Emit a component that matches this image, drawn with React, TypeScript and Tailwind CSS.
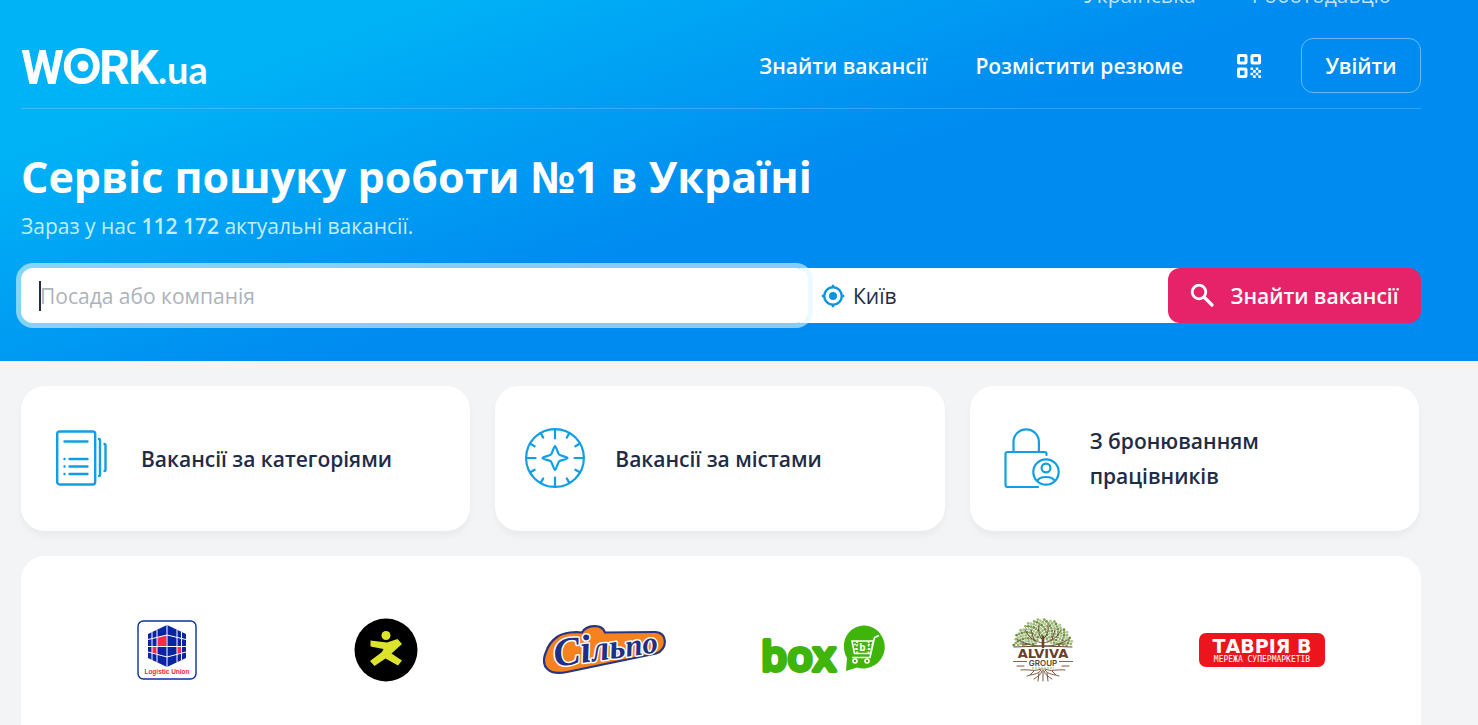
import type { ReactNode } from "react";

const container = "pl-[21px] pr-[57px]";

function WorkLogo() {
  return (
    <svg width="190" height="50" viewBox="0 -4 190 50" fill="#fff" fontWeight="700" role="img" aria-label="WORK.ua">
      <g fontFamily="Roboto, sans-serif" fontSize="49">
        <text x="0" y="38">W</text>
        <text x="41" y="38" fontFamily="Lato, sans-serif">O</text>
        <text x="78" y="38" fontSize="48">R</text>
        <text x="107" y="38" fontSize="48">K</text>
      </g>
      <text x="137" y="38" fontFamily="Lato, sans-serif" fontSize="38">.ua</text>
      <circle cx="62" cy="20" r="5.5" />
    </svg>
  );
}

function QrIcon() {
  return (
    <svg width="24" height="24" viewBox="0 0 24 24" fill="none" stroke="#fff" strokeWidth="3">
      <rect x="1.5" y="1.5" width="7.5" height="7.5" rx="0.5" />
      <rect x="15" y="1.5" width="7.5" height="7.5" rx="0.5" />
      <rect x="1.5" y="15" width="7.5" height="7.5" rx="0.5" />
      <path
        fill="#fff"
        stroke="none"
        d="M13.5 13.5h2.6v2.6h-2.6zM18.7 13.5h2.6v2.6h-2.6zM16.1 16.1h2.6v2.6h-2.6zM21.3 16.1h2.6v2.6h-2.6zM13.5 18.7h2.6v2.6h-2.6zM18.7 18.7h2.6v2.6h-2.6zM16.1 21.3h2.6v2.6h-2.6zM21.3 21.3h2.6v2.6h-2.6z"
      />
    </svg>
  );
}

function TargetIcon() {
  return (
    <svg width="24" height="24" viewBox="0 0 24 24" fill="none" stroke="#0f93dc">
      <circle cx="12" cy="12" r="8.8" strokeWidth="2.4" />
      <circle cx="12" cy="12" r="4" fill="#0f93dc" stroke="none" />
      <path strokeWidth="2.4" d="M12 .8V4M12 20v3.200M.8 12H4M20 12h3.200" />
    </svg>
  );
}

function SearchIcon() {
  return (
    <svg width="24" height="24" viewBox="0 0 24 24" fill="none" stroke="#fff">
      <circle cx="9" cy="8" r="6.8" strokeWidth="2.8" />
      <path strokeWidth="3.2" strokeLinecap="round" d="M14.500 13.500 22 21" />
    </svg>
  );
}

function CategoriesIcon() {
  return (
    <svg width="60" height="60" viewBox="-4 -1 60 60" fill="none" stroke="#109fe4" strokeWidth="2.4" strokeLinecap="round">
      <rect x="2.200" y="2.500" width="38" height="53" rx="2.500" />
      <path d="M9.500 12.500h23M14.500 30h18M14.500 37.500h18M14.500 45h18M9.500 30h.1M9.500 37.500h.1M9.500 45h.1" />
      <path d="M44 10q1 0 1 1.500v34q0 1.500-1 1.500M49.500 15q1 0 1 1.500v24q0 1.500-1 1.500" />
    </svg>
  );
}

function CompassIcon() {
  const ticks = Array.from({ length: 12 }, (_, i) => i);
  return (
    <svg width="60" height="60" viewBox="0 0 60 60" fill="none" stroke="#109fe4" strokeWidth="2.2" strokeLinecap="round" strokeLinejoin="round">
      <circle cx="30" cy="30" r="28.900" />
      {ticks.map((i) => (
        <path key={i} d={i % 3 === 0 ? "M30 1v9.500" : "M30 1v5.500"} transform={`rotate(${i * 30} 30 30)`} />
      ))}
      <path d="M30 18c1 0 3 7.500 4 8.500s8.500 2.500 8.500 3.500-7.500 2.500-8.500 3.500-3 8.500-4 8.500-3-7.500-4-8.500-8.500-2.500-8.500-3.500 7.500-2.500 8.500-3.500 3-8.500 4-8.500z" />
    </svg>
  );
}

function ReservedIcon() {
  return (
    <svg width="60" height="60" viewBox="-4 0 60 60" fill="none" stroke="#109fe4" strokeWidth="2.2" strokeLinecap="round">
      <path d="M9.500 24V14a12.700 12.700 0 0 1 25.400 0v10" />
      <path d="M42.500 27v-1.500q0-1.500-2-1.500H3.500q-2 0-2 2v31q0 2 2 2H34" />
      <circle cx="42" cy="44" r="12.700" />
      <circle cx="42" cy="40" r="4.400" />
      <path d="M33.500 52.500q2-3.500 8.500-3.500t8.500 3.500" />
    </svg>
  );
}

function LogisticUnion() {
  return (
    <svg width="60" height="60" viewBox="0 0 60 60">
      <rect x="1" y="1" width="58" height="58" rx="5.500" fill="#fff" stroke="#0b2f9e" strokeWidth="1.400" />
      <path d="M30 5 49 14v24L30 47 11 38V14z" fill="#0a23a0" />
      <path d="M20 17.500 29.500 15v11H20zM15 27h5v6.500l-5-1zM40 27h4.500v5.500l-4.500 1z" fill="#ff2b43" />
      <path
        d="M30 5v42M20 9.500v33M15 12v28M40 9.500v33M44.500 12v28M11 19.500 30 15l19 4.500M11 26.500h38M11 32l19 5 19-5"
        fill="none"
        stroke="#fff"
        strokeWidth="1"
      />
      <text x="30" y="54" textAnchor="middle" fontFamily="Liberation Sans, sans-serif" fontWeight="700" fontSize="6.500" fill="#f5233b">
        Logistic Union
      </text>
    </svg>
  );
}

function RunningMan() {
  return (
    <svg width="64" height="64" viewBox="0 0 64 64">
      <circle cx="32" cy="32" r="31.500" fill="#000" />
      <g fill="#dbe32b">
        <circle cx="32" cy="17.500" r="4.500" />
        <path d="M16.500 22.500 33 24.500 43.500 21 48 26 37.500 35.500 48 42.500 44 47.500 31.500 40.500 20.500 48 16 43 28 34 29.500 31 16.500 28.500z" />
      </g>
    </svg>
  );
}

function Silpo() {
  return (
    <svg width="124" height="52" viewBox="0 0 124 52">
      <path
        d="M14 13C21 8 33 7.500 39 8.500 43 1 59-1 62 8.500L112 8C125 8 125 26 113 29.500L24 48C5 52-3 42 3 28 5 22 9 16.500 14 13z"
        fill="#f5821f"
        stroke="#27357f"
        strokeWidth="2.200"
      />
      {/* white halo sits behind the letters */}
      <g
        transform="rotate(-8 60 30)"
        fontFamily="Liberation Serif, serif"
        fontWeight="700"
        fontStyle="italic"
        stroke="#fff"
        strokeWidth="3"
        paintOrder="stroke"
        strokeLinejoin="round"
        fill="#1f2f86"
      >
        <text x="11" y="36">
          <tspan fontSize="40">Сі</tspan>
          <tspan fontSize="35">ль</tspan>
          <tspan fontSize="31">по</tspan>
        </text>
      </g>
    </svg>
  );
}

function BoxMarket() {
  return (
    <svg width="126" height="52" viewBox="0 0 126 52">
      <text
        x="0"
        y="47"
        fontFamily="Open Sans, sans-serif"
        fontWeight="600"
        fontSize="42"
        fill="#3fb50b"
        stroke="#3fb50b"
        strokeWidth="4"
        strokeLinejoin="round"
      >
        box
      </text>
      <path d="M86 34C78 20 86 1.500 104 1.500a21.500 21.500 0 1 1-8 42L85 47z" fill="#3fb50b" />
      <g fill="none" stroke="#fff" strokeWidth="1.600">
        <path d="M118 11.500l-4.500 2L109 33.500H91M91 17h21.500l-3 12.500H93.500z" />
        <path strokeDasharray="2 1.500" d="M93 20.500h18M93.500 25h16M96 17v12M107.500 17v12" />
        <circle cx="94" cy="37" r="2" />
        <circle cx="106" cy="37" r="2" />
      </g>
      <circle cx="101.500" cy="23" r="5" fill="#3fb50b" />
      <text x="101.500" y="26.500" textAnchor="middle" fontFamily="Open Sans, sans-serif" fontWeight="700" fontSize="10" fill="#fff">
        b
      </text>
    </svg>
  );
}

// The crown is a half-disc of leaves laid out on a sunflower spiral.
const leaves = Array.from({ length: 340 }, (_, i) => {
  const r = 30 * Math.sqrt((i + 1) / 340);
  const a = i * 2.399963;
  return { x: 31 + r * Math.cos(a), y: 31 + r * Math.sin(a), i };
}).filter((leaf) => leaf.y < 28 && Math.hypot(leaf.x - 31, leaf.y - 31) > 9);

const leafColors = ["#8aa85a", "#9db873", "#6f8d49", "#b4c795"];

function Alviva() {
  return (
    <svg width="62" height="64" viewBox="0 0 62 64">
      {leaves.map((leaf) => (
        <circle key={leaf.i} cx={leaf.x} cy={leaf.y} r="1.400" fill={leafColors[leaf.i % 4]} />
      ))}
      <g fill="none" stroke="#68452f" strokeLinecap="round">
        <path strokeWidth="2.600" d="M31 29V19" />
        <path
          strokeWidth="0.900"
          d="M31 22C27 19 26 14 27 7M31 21c4-3 6-8 5-14M31 25C23 24 17 20 13 12M31 25c8-1 14-5 18-13M30 28C20 28 12 26 5 21M32 28c10 0 18-2 25-7M22 22l-3-10M40 22l3-10M16 26l-7 0M46 26l7 0"
        />
        <path strokeWidth="1" d="M2 29q29-2 58 0" />
      </g>
      <text x="31" y="40" textAnchor="middle" fontFamily="DejaVu Sans, sans-serif" fontWeight="700" fontSize="13" fill="#68402b">
        ALVIVA
      </text>
      <text x="31" y="48" textAnchor="middle" fontFamily="Inter, sans-serif" fontWeight="600" fontSize="8" fill="#68402b">
        GROUP
      </text>
      <path d="M1 43.500h14M47 43.500h14" stroke="#68402b" strokeWidth="0.800" />
      <path
        d="M31 51v12M29 51c-6 3-12 0-20 1M33 51c6 3 12 0 20 1M29 52c-3 5-9 4-14 6M33 52c3 5 9 4 14 6M30 53c-1 4-5 6-8 8M32 53c1 4 5 6 8 8M22 53l-4 4M40 53l4 4M27 55l-1 8M35 55l1 8M12 48H5M50 48h7"
        fill="none"
        stroke="#7b5741"
        strokeWidth="1"
        strokeLinecap="round"
      />
      <path d="M20 50h22" stroke="#9ab36e" strokeWidth="1.200" strokeDasharray="2 1" />
    </svg>
  );
}

function Tavria() {
  return (
    <svg width="126" height="34" viewBox="0 0 126 34">
      <rect width="126" height="34" rx="7" fill="#ec151d" />
      <text x="63" y="20" textAnchor="middle" fontFamily="DejaVu Sans, sans-serif" fontWeight="700" fontSize="19" fill="#fff">
        ТАВРІЯ В
      </text>
      <text x="63" y="29" textAnchor="middle" fontFamily="DejaVu Sans Mono, monospace" fontSize="8" fill="#fff">
        МЕРЕЖА СУПЕРМАРКЕТІВ
      </text>
    </svg>
  );
}

function CategoryCard({ icon, children }: { icon: ReactNode; children: ReactNode }) {
  return (
    <a
      href="#"
      className="flex h-[145px] items-center gap-[30px] rounded-3xl bg-white pr-16 pb-0.5 pl-[30px] text-[21px] leading-[35px] font-semibold shadow-[0_5px_6px_rgba(0,0,0,0.04)]"
    >
      <span className="w-[60px] shrink-0">{icon}</span>
      <span className="pt-[3px]">{children}</span>
    </a>
  );
}

const partners = [
  { name: "Logistic Union", logo: <LogisticUnion /> },
  { name: "Running man", logo: <RunningMan /> },
  { name: "Сільпо", logo: <Silpo /> },
  { name: "box", logo: <BoxMarket /> },
  { name: "Alviva Group", logo: <Alviva /> },
  { name: "Таврія В", logo: <Tavria /> },
];

export default function App() {
  return (
    <div className="h-screen overflow-hidden bg-[#f3f4f6] font-['Open_Sans',sans-serif] text-[#1f2c47]">
      <header className={`${container} h-[361px] overflow-hidden bg-[linear-gradient(160deg,#00b2f6_18%,#008bf0_53%)] text-white`}>
        <div className="-mt-5 flex h-8 items-center justify-end gap-14 pr-[30px] text-[21px] text-white/75">
          <a href="#">Українська</a>
          <a href="#">Роботодавцю</a>
        </div>

        <div className="mt-[26px] flex h-[71px] items-start border-b border-white/20">
          <a href="#" className="mt-1">
            <WorkLogo />
          </a>
          <nav className="ml-auto flex h-[55px] items-center text-[21px] font-semibold">
            <a href="#" className="mr-12 pt-0.5">Знайти вакансії</a>
            <a href="#" className="mr-[54px] pt-0.5">Розмістити резюме</a>
            <button type="button" aria-label="QR" className="mr-10">
              <QrIcon />
            </button>
            <a href="#" className="flex h-full w-[120px] items-center justify-center rounded-xl border border-white/40 pt-0.5">
              Увійти
            </a>
          </nav>
        </div>

        <h1 className="mt-10 text-[43px] leading-[56px] font-bold">Сервіс пошуку роботи №1 в Україні</h1>
        <p className="mt-[3px] text-[21px] leading-9 text-[#c5edff]">
          Зараз у нас <b className="font-semibold">112 172</b> актуальні вакансії.
        </p>

        <form className="mt-6 flex h-[55px] text-[21px] text-[#1f2c47]">
          <label className="relative z-10 flex flex-1 rounded-xl bg-white shadow-[0_0_0_5px_rgba(224,247,255,0.6)]">
            <span className="absolute top-[13px] left-[18px] h-[30px] w-[2px] bg-[#1f2c47]" />
            <input
              type="text"
              aria-label="Посада або компанія"
              placeholder="Посада або компанія"
              className="w-full rounded-xl bg-transparent pt-0.5 pl-[19px] outline-none placeholder:text-[#adb3bb]"
            />
          </label>
          <label className="-ml-2 flex w-96 items-center gap-2 bg-white pl-[21px]">
            <TargetIcon />
            <input type="text" aria-label="Місто" defaultValue="Київ" className="w-72 bg-transparent pt-0.5 outline-none" />
          </label>
          <button
            type="button"
            className="-ml-4 flex w-[253px] items-center justify-center gap-4 rounded-xl bg-[#e62368] font-semibold text-white"
          >
            <SearchIcon />
            <span className="pt-0.5">Знайти вакансії</span>
          </button>
        </form>
      </header>

      <main className={container}>
        <div className="mt-[25px] grid grid-cols-3 gap-[25px] pr-0.5">
          <CategoryCard icon={<CategoriesIcon />}>Вакансії за категоріями</CategoryCard>
          <CategoryCard icon={<CompassIcon />}>Вакансії за містами</CategoryCard>
          <CategoryCard icon={<ReservedIcon />}>З бронюванням працівників</CategoryCard>
        </div>

        <section className="mt-[25px] grid grid-cols-6 rounded-3xl bg-white pt-[62px] pr-[50px] pb-48 pl-[37px]">
          {partners.map((p) => (
            <a key={p.name} href="#" aria-label={p.name} className="flex h-16 items-center justify-center">
              {p.logo}
            </a>
          ))}
        </section>
      </main>
    </div>
  );
}
